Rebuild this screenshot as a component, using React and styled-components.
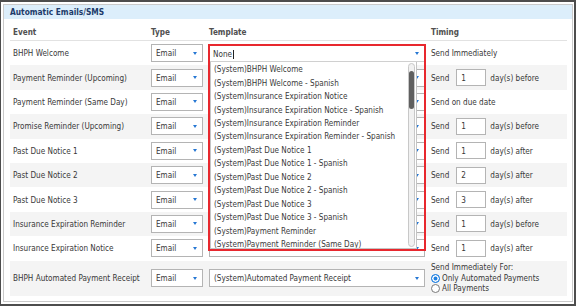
import React from "react";
import styled, { createGlobalStyle } from "styled-components";

const Global = createGlobalStyle`
  html, body { margin: 0; padding: 0; background: #fff; }
  body { font-family: "DejaVu Sans Condensed", "DejaVu Sans", sans-serif; font-size: 8.1px; color: #383838; }
  * { box-sizing: border-box; }
`;

const Frame = styled.div`
  width: 576px;
  height: 306px;
  border-style: solid;
  border-color: #4d4d4d;
  border-width: 2px 2px 2px 1px;
  padding: 2px 1px 2px 2px;
  background: #fff;
`;

const Panel = styled.section`
  height: 100%;
  border: 1px solid #cacaca;
  background: #fff;
  display: flex;
  flex-direction: column;
`;

const Band = styled.div`
  height: 14px;
  background: #dceefb;
  display: flex;
  align-items: center;
  padding-left: 6px;
  font-weight: bold;
  color: #1d3b6a;
  font-size: 8.3px;
`;

const Body = styled.div`
  padding: 0 5px 0 6px;
`;

const Grid = styled.div`
  display: grid;
  grid-template-columns: 141px 58px 222px 1fr;
  align-items: center;
  height: ${(p) => p.$h}px;
  background: ${(p) => (p.$alt ? "#f4f4f4" : "#fff")};
`;

const HeadRow = styled(Grid)`
  align-items: end;
  padding-bottom: 3px;
  border-bottom: 1px solid #e2e2e2;
`;

const HeadCell = styled.div`
  font-weight: bold;
  color: #505050;
  padding-left: ${(p) => (p.$first ? 3 : 0)}px;
`;

const EventCell = styled.div`
  padding-left: 3px;
  white-space: nowrap;
`;

const Cell = styled.div`
  display: flex;
  align-items: center;
  position: relative;
`;

const SelectBox = styled.div`
  width: ${(p) => p.$w}px;
  height: 18px;
  border: 1px solid #b4b4b4;
  background: #fff;
  display: flex;
  align-items: center;
  justify-content: space-between;
  padding: 0 5px 0 ${(p) => p.$pl || 4}px;
  white-space: nowrap;
  overflow: hidden;
`;

const Arrow = styled.span`
  width: 0;
  height: 0;
  border-left: 2.5px solid transparent;
  border-right: 2.5px solid transparent;
  border-top: 3px solid #2677d3;
  flex: none;
  margin-left: auto;
`;

const Select = ({ w, value, pl }) => (
  <SelectBox $w={w} $pl={pl}>
    {value ? <span>{value}</span> : null}
    <Arrow />
  </SelectBox>
);

const TimingText = styled.div`
  display: flex;
  align-items: center;
  white-space: nowrap;
`;

const DayInput = styled.div`
  width: 30px;
  height: 17px;
  border: 1px solid #b4b4b4;
  background: #fff;
  display: flex;
  align-items: center;
  padding-left: 4px;
  margin: 0 4px 0 7px;
`;

const RadioGroup = styled.div`
  display: flex;
  flex-direction: column;
  line-height: 10.5px;
`;

const RadioRow = styled.div`
  display: flex;
  align-items: center;
  gap: 2px;
`;

const RadioDot = styled.span`
  width: 9px;
  height: 9px;
  border-radius: 50%;
  border: 1px solid ${(p) => (p.$on ? "#1e7fe0" : "#7a7a7a")};
  background: ${(p) => (p.$on ? "#1e7fe0" : "#fff")};
  box-shadow: ${(p) => (p.$on ? "inset 0 0 0 1.5px #fff" : "none")};
  flex: none;
`;

/* open combo overlay */
const Anchor = styled.div`
  width: 216px;
  height: 18px;
`;

const Combo = styled.div`
  position: absolute;
  top: 0;
  left: -1px;
  width: 218px;
  border: 2px solid #e8282e;
  z-index: 5;
`;

const ComboInput = styled.div`
  height: 16px;
  background: #fff;
  display: flex;
  align-items: center;
  justify-content: space-between;
  padding: 0 5px 0 3px;
  border-bottom: 1px solid #d0d0d0;
`;

const Caret = styled.span`
  display: inline-block;
  width: 1px;
  height: 9px;
  background: #222;
  margin-left: 1px;
  vertical-align: middle;
`;

const List = styled.div`
  width: 207px;
  height: 187px;
  background: #fff;
  border: 1px solid #c4c4c4;
  border-top: none;
  position: relative;
  overflow: hidden;
  padding-top: 1px;
`;

const Item = styled.div`
  height: 13.46px;
  line-height: 13.46px;
  padding-left: 3px;
  white-space: nowrap;
  color: #3a3a3a;
`;

const Track = styled.div`
  position: absolute;
  right: 1px;
  top: 1px;
  bottom: 1px;
  width: 7px;
  border: 1px solid #c8c8c8;
  border-radius: 4px;
  background: #f1f1f1;
`;

const Thumb = styled.div`
  position: absolute;
  left: 0px;
  top: 7px;
  width: 5px;
  height: 38px;
  border-radius: 3px;
  background: #5f5f5f;
`;

const listItems = [
  "(System)BHPH Welcome",
  "(System)BHPH Welcome - Spanish",
  "(System)Insurance Expiration Notice",
  "(System)Insurance Expiration Notice - Spanish",
  "(System)Insurance Expiration Reminder",
  "(System)Insurance Expiration Reminder - Spanish",
  "(System)Past Due Notice 1",
  "(System)Past Due Notice 1 - Spanish",
  "(System)Past Due Notice 2",
  "(System)Past Due Notice 2 - Spanish",
  "(System)Past Due Notice 3",
  "(System)Past Due Notice 3 - Spanish",
  "(System)Payment Reminder",
  "(System)Payment Reminder (Same Day)",
];

/* template selects of rows 2–9 sit under the open list, so their values are not shown */
const rows = [
  { event: "BHPH Welcome", open: true, timing: { text: "Send Immediately" } },
  { event: "Payment Reminder (Upcoming)", timing: { n: 1, dir: "before" } },
  { event: "Payment Reminder (Same Day)", timing: { text: "Send on due date" } },
  { event: "Promise Reminder (Upcoming)", timing: { n: 1, dir: "before" } },
  { event: "Past Due Notice 1", timing: { n: 1, dir: "after" } },
  { event: "Past Due Notice 2", timing: { n: 2, dir: "after" } },
  { event: "Past Due Notice 3", timing: { n: 3, dir: "after" } },
  { event: "Insurance Expiration Reminder", timing: { n: 1, dir: "before" } },
  { event: "Insurance Expiration Notice", timing: { n: 1, dir: "after" } },
  { event: "BHPH Automated Payment Receipt", template: "(System)Automated Payment Receipt", timing: { radio: true }, tall: true },
];

function Timing({ t }) {
  if (t.radio) {
    return (
      <RadioGroup>
        <span>Send Immediately For:</span>
        <RadioRow>
          <RadioDot $on />
          <span>Only Automated Payments</span>
        </RadioRow>
        <RadioRow>
          <RadioDot />
          <span>All Payments</span>
        </RadioRow>
      </RadioGroup>
    );
  }
  if (t.text) return <TimingText>{t.text}</TimingText>;
  return (
    <TimingText>
      Send
      <DayInput>{t.n}</DayInput>
      day(s) {t.dir}
    </TimingText>
  );
}

export default function App() {
  return (
    <>
      <Global />
      <Frame>
        <Panel>
          <Band>Automatic Emails/SMS</Band>
          <Body>
            <HeadRow $h={22}>
              <HeadCell $first>Event</HeadCell>
              <HeadCell>Type</HeadCell>
              <HeadCell>Template</HeadCell>
              <HeadCell>Timing</HeadCell>
            </HeadRow>
            {rows.map((r, i) => (
              <Grid key={r.event} $h={r.tall ? 35.4 : 24.4} $alt={i % 2 === 1}>
                <EventCell>{r.event}</EventCell>
                <Cell>
                  <Select w={52} value="Email" />
                </Cell>
                <Cell>
                  {r.open ? (
                    <Anchor>
                      <Combo>
                        <ComboInput>
                          <span>
                            None
                            <Caret />
                          </span>
                          <Arrow />
                        </ComboInput>
                        <List>
                          {listItems.map((it) => (
                            <Item key={it}>{it}</Item>
                          ))}
                          <Track>
                            <Thumb />
                          </Track>
                        </List>
                      </Combo>
                    </Anchor>
                  ) : (
                    <Select w={216} value={r.template} />
                  )}
                </Cell>
                <Cell>
                  <Timing t={r.timing} />
                </Cell>
              </Grid>
            ))}
          </Body>
        </Panel>
      </Frame>
    </>
  );
}
